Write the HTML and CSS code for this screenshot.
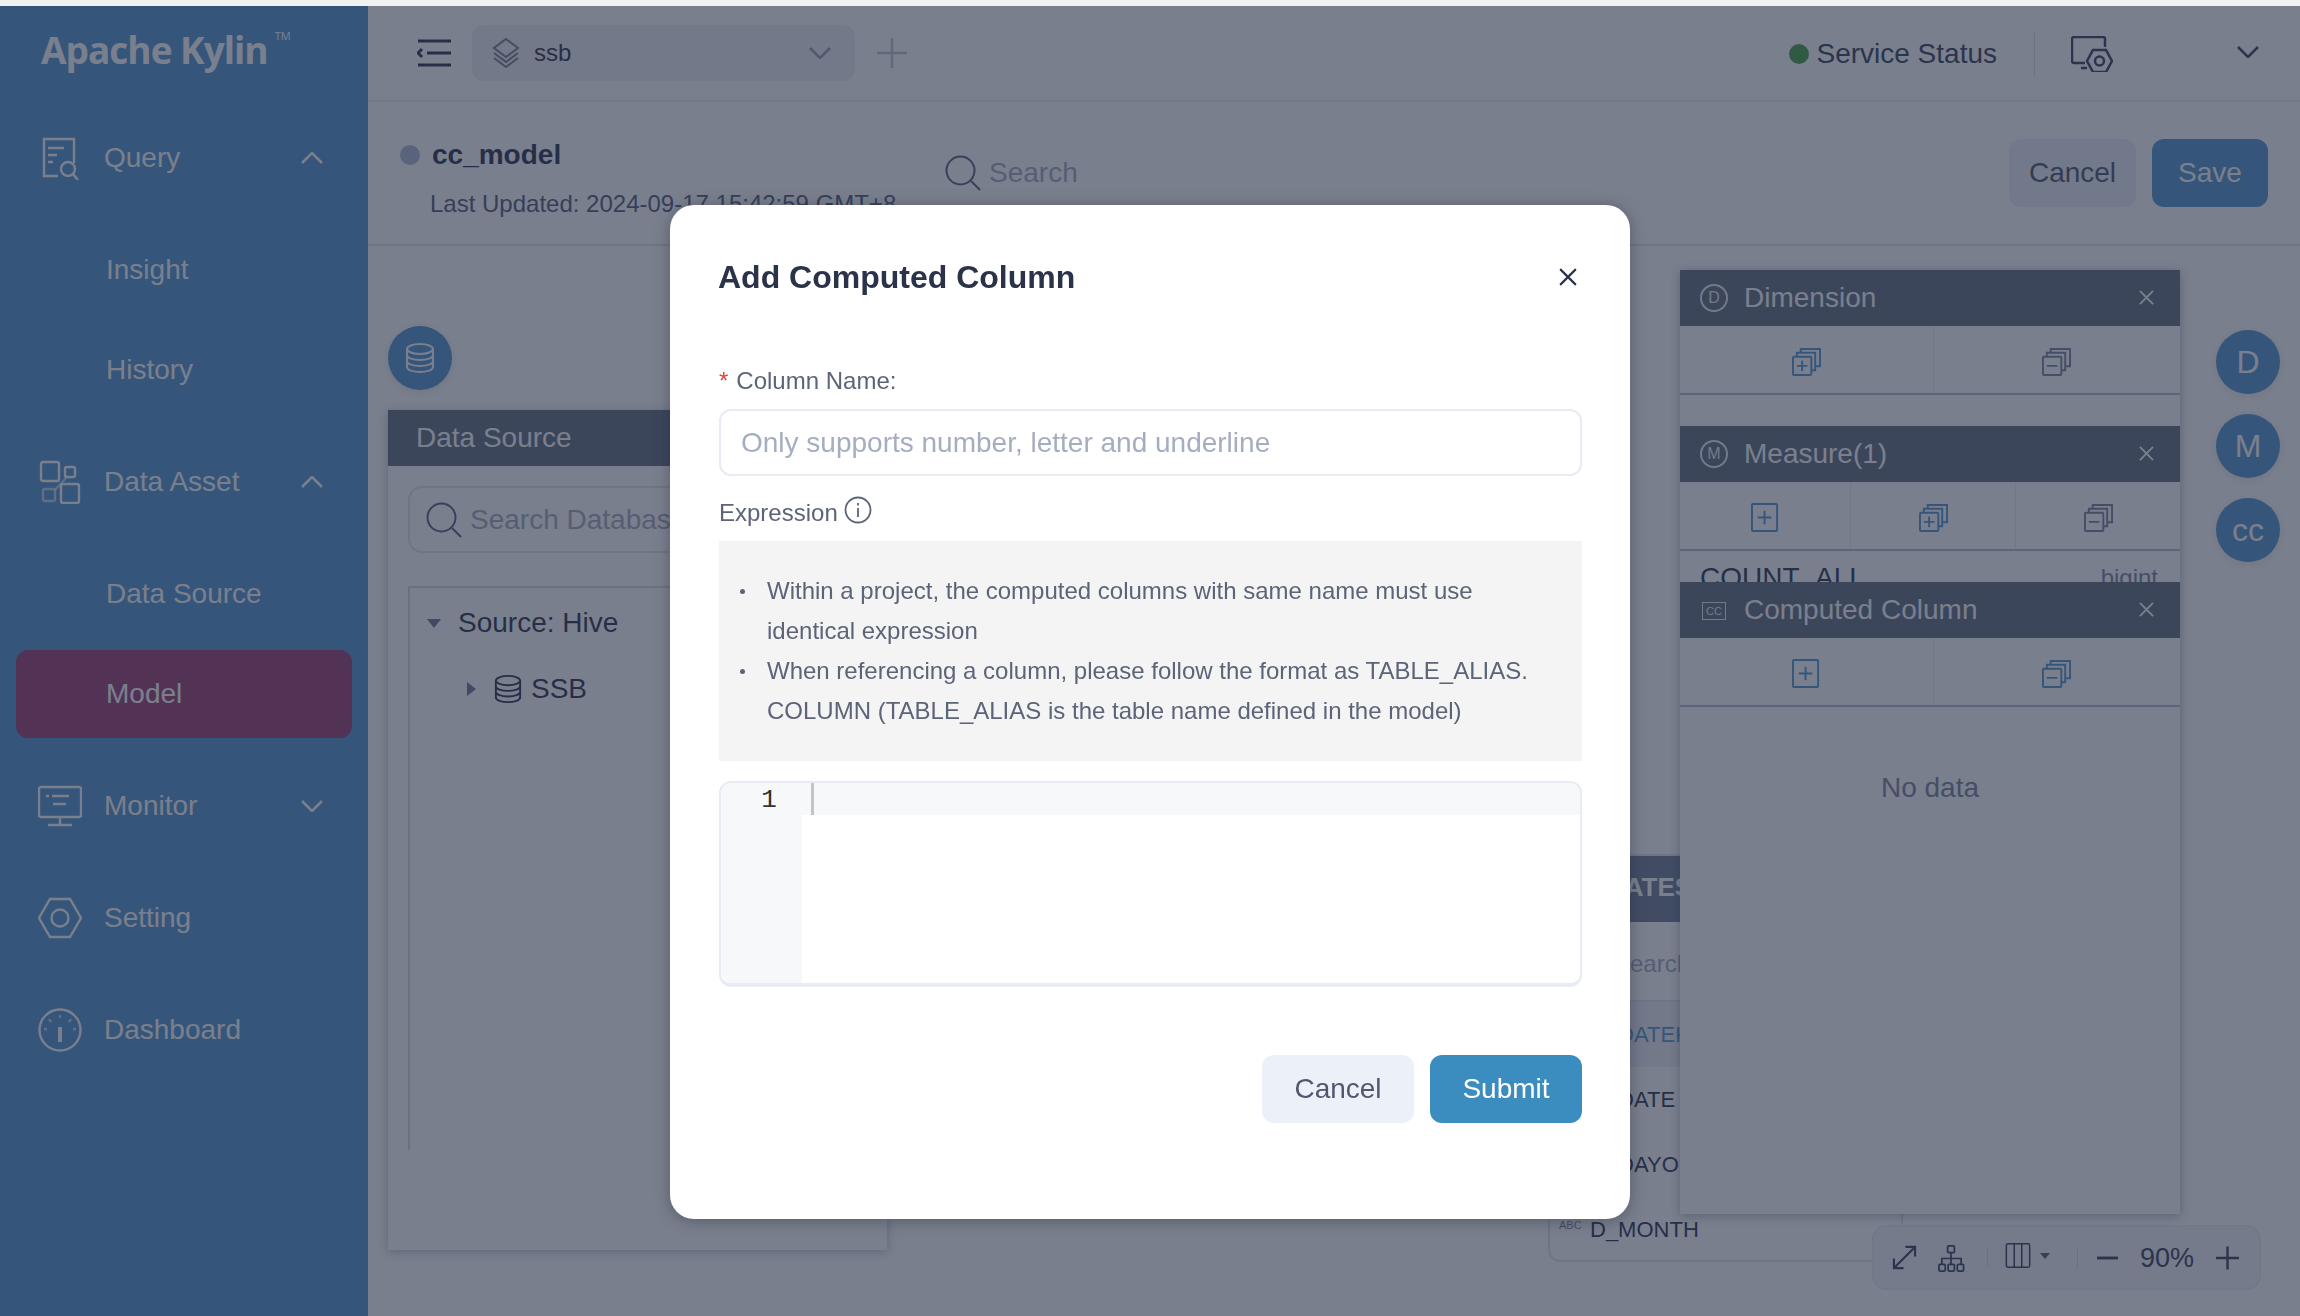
FILE: index.html
```html
<!DOCTYPE html>
<html lang="en">
  <head>
    <meta charset="UTF-8" />
    <title>Apache Kylin</title>
    <link rel="stylesheet" href="styles.css">
  </head>
  <body>
    <svg class="defs" width="0" height="0">
      <symbol id="i-add" viewBox="0 0 30 30"><rect x="1" y="1" width="26" height="28" rx="1"/><path d="M14 8v14M7 15h14"/></symbol>
      <symbol id="i-add-batch" viewBox="0 0 30 30"><rect x="1" y="10" width="19" height="19" rx="1"/><path d="M5 10V6h19v18h-4M9 6V2h20v18h-5M10.500 14v11M5 19.500h11"/></symbol>
      <symbol id="i-minus-batch" viewBox="0 0 30 30"><rect x="1" y="10" width="19" height="19" rx="1"/><path d="M5 10V6h19v18h-4M9 6V2h20v18h-5M5 19.500h11"/></symbol>
      <symbol id="i-db" viewBox="0 0 30 30"><ellipse cx="15" cy="6" rx="13" ry="5"/><path d="M2 6v18c0 3 6 5 13 5s13-2 13-5V6M2 12c0 3 6 5 13 5s13-2 13-5M2 18c0 3 6 5 13 5s13-2 13-5"/></symbol>
      <symbol id="i-search" viewBox="0 0 36 36"><circle cx="15.500" cy="15.500" r="14"/><path d="M26 26l9 9"/></symbol>
      <symbol id="i-close" viewBox="0 0 16 16"><path d="M1 1l14 14M15 1L1 15"/></symbol>
    </svg>

    <div class="app">
      <!-- left menu -->
      <aside class="sidebar">
        <div class="logo">Apache Kylin<sup>TM</sup></div>
        <div class="menu-title">
          <svg class="menu-icon" viewBox="0 0 44 44"><path d="M20 40H6V3h30v24M10 12h16M10 19h9M10 26h5"/><circle cx="30" cy="33" r="7"/><path d="M35 38l5 6"/></svg>
          <span>Query</span>
          <svg class="chev up" viewBox="0 0 22 12"><path d="M1 11L11 1l10 10"/></svg>
        </div>
        <div class="menu-sub">
          <div class="menu-item">Insight</div>
          <div class="menu-item">History</div>
        </div>
        <div class="menu-title">
          <svg class="menu-icon" viewBox="0 0 44 44"><rect x="3" y="2" width="18" height="19" rx="2"/><rect x="27" y="7" width="10" height="10" rx="2"/><rect x="5" y="29" width="12" height="12" rx="2" class="dim"/><rect x="23" y="24" width="18" height="19" rx="2"/><path d="M28 18L17 30" class="dim"/></svg>
          <span>Data Asset</span>
          <svg class="chev up" viewBox="0 0 22 12"><path d="M1 11L11 1l10 10"/></svg>
        </div>
        <div class="menu-sub">
          <div class="menu-item">Data Source</div>
          <div class="menu-item active"><span>Model</span></div>
        </div>
        <div class="menu-title">
          <svg class="menu-icon" viewBox="0 0 44 44"><rect x="1" y="3" width="42" height="30" rx="2"/><path d="M8 12h3M14 12h17M15 20h13M22 33v8M10 41h24"/></svg>
          <span>Monitor</span>
          <svg class="chev" viewBox="0 0 22 12"><path d="M1 1l10 10L21 1"/></svg>
        </div>
        <div class="menu-title">
          <svg class="menu-icon" viewBox="0 0 44 44"><path d="M12 3h20l11 19-11 19H12L1 22z"/><circle cx="22" cy="22" r="8.500"/></svg>
          <span>Setting</span>
        </div>
        <div class="menu-title">
          <svg class="menu-icon" viewBox="0 0 44 44"><circle cx="22" cy="22" r="20.500"/><path d="M22 7v3M11 11l2 3M33 11l-2 3M6 21h3M35 21h3" class="dim"/><path d="M22 19v15" stroke-width="4"/></svg>
          <span>Dashboard</span>
        </div>
      </aside>

      <div class="main">
        <header class="topbar">
          <svg class="hamburger" viewBox="0 0 34 28"><path d="M1 2h33M10 14h24M1 26h33M5 10l-4 4 4 4"/></svg>
          <div class="project">
            <svg class="layers" viewBox="0 0 28 30"><path d="M14 1l12 9-12 9-12-9zM2 15l12 9 12-9M2 20l12 9 12-9"/></svg>
            <span>ssb</span>
            <svg class="chev" viewBox="0 0 22 12"><path d="M1 1l10 10L21 1"/></svg>
          </div>
          <svg class="add-project" viewBox="0 0 30 30"><path d="M15 0v30M0 15h30"/></svg>
          <div class="top-right">
            <i class="dot"></i>
            <span class="status-text">Service Status</span>
            <i class="top-divider"></i>
            <svg class="admin-icon" viewBox="0 0 42 36"><path d="M14 27H3a2 2 0 0 1-2-2V3a2 2 0 0 1 2-2h29a2 2 0 0 1 2 2v8M10 32h6"/><path d="M22 14h13l6 11-6 11H22l-6-11z"/><circle cx="28.500" cy="25" r="4.500"/></svg>
            <svg class="chev user-chev" viewBox="0 0 22 12"><path d="M1 1l10 10L21 1"/></svg>
          </div>
        </header>

        <div class="model-bar">
          <div class="model-info">
            <div class="model-name"><i class="model-dot"></i>cc_model</div>
            <div class="model-time">Last Updated: 2024-09-17 15:42:59 GMT+8</div>
          </div>
          <div class="model-search">
            <svg class="search-icon"><use href="#i-search"/></svg>
            <span>Search</span>
          </div>
          <div class="model-btns">
            <button class="btn btn-plain">Cancel</button>
            <button class="btn btn-primary">Save</button>
          </div>
        </div>

        <!-- model canvas, everything in here is placed freely -->
        <div class="canvas">
          <div class="round-btn db-btn"><svg><use href="#i-db"/></svg></div>

          <div class="ds-panel">
            <div class="panel-head">Data Source</div>
            <div class="ds-body">
              <div class="ds-search">
                <svg class="search-icon"><use href="#i-search"/></svg>
                <span>Search Database</span>
              </div>
              <div class="tree">
                <div class="tree-row"><i class="tri-down"></i>Source: Hive</div>
                <div class="tree-row tree-child"><i class="tri-right"></i><svg class="tree-db"><use href="#i-db"/></svg>SSB</div>
              </div>
            </div>
          </div>

          <div class="table-node">
            <div class="table-head">DATES</div>
            <div class="table-search">Search</div>
            <div class="col-row col-on"><small>ABC</small>D_DATEKEY</div>
            <div class="col-row"><small>ABC</small>D_DATE</div>
            <div class="col-row"><small>ABC</small>D_DAYOFWEEK</div>
            <div class="col-row"><small>ABC</small>D_MONTH</div>
          </div>

          <div class="side-panels">
            <section class="side-panel">
              <div class="side-head">
                <i class="head-mark">D</i><span>Dimension</span>
                <svg class="head-close"><use href="#i-close"/></svg>
              </div>
              <div class="side-actions">
                <div class="act act-on"><svg><use href="#i-add-batch"/></svg></div>
                <div class="act"><svg><use href="#i-minus-batch"/></svg></div>
              </div>
            </section>
            <section class="side-panel">
              <div class="side-head">
                <i class="head-mark">M</i><span>Measure(1)</span>
                <svg class="head-close"><use href="#i-close"/></svg>
              </div>
              <div class="side-actions">
                <div class="act act-on"><svg><use href="#i-add"/></svg></div>
                <div class="act act-on"><svg><use href="#i-add-batch"/></svg></div>
                <div class="act"><svg><use href="#i-minus-batch"/></svg></div>
              </div>
              <div class="measure-row"><span>COUNT_ALL</span><em>bigint</em></div>
            </section>
            <section class="side-panel side-panel-cc">
              <div class="side-head">
                <i class="head-mark head-mark-cc">CC</i><span>Computed Column</span>
                <svg class="head-close"><use href="#i-close"/></svg>
              </div>
              <div class="side-actions">
                <div class="act act-on"><svg><use href="#i-add"/></svg></div>
                <div class="act act-on"><svg><use href="#i-minus-batch"/></svg></div>
              </div>
              <div class="no-data">No data</div>
            </section>
          </div>

          <div class="side-tabs">
            <div class="round-btn">D</div>
            <div class="round-btn">M</div>
            <div class="round-btn">cc</div>
          </div>

          <div class="zoom-bar">
            <svg class="zb-expand" viewBox="0 0 26 26"><path d="M2 24L24 2M14 2h10v10M2 14v10h10"/></svg>
            <svg class="zb-tree" viewBox="0 0 28 28"><rect x="10" y="1" width="7" height="7" rx="1"/><rect x="1" y="20" width="6.500" height="7" rx="1"/><rect x="10.500" y="20" width="6.500" height="7" rx="1"/><rect x="20" y="20" width="6.500" height="7" rx="1"/><path d="M13.500 8v6M4 20v-6h20v6M13.500 14v6"/></svg>
            <i class="zb-line zb-line-a"></i>
            <svg class="zb-cols" viewBox="0 0 30 30"><rect x="1" y="1" width="28" height="28" rx="2"/><path d="M10.500 1v28M19.500 1v28"/></svg>
            <i class="zb-caret"></i>
            <i class="zb-line zb-line-b"></i>
            <svg class="zb-minus" viewBox="0 0 22 4"><path d="M0 2h22"/></svg>
            <span class="zb-val">90%</span>
            <svg class="zb-plus" viewBox="0 0 24 24"><path d="M12 0v24M0 12h24"/></svg>
          </div>
        </div>
      </div>
    </div>

    <div class="mask"></div>

    <div class="dialog-wrap">
      <div class="dialog">
        <div class="dialog-head">
          <h2>Add Computed Column</h2>
          <svg class="dialog-close"><use href="#i-close"/></svg>
        </div>
        <label class="form-label"><b>*</b>Column Name:</label>
        <input class="form-input" type="text" placeholder="Only supports number, letter and underline" />
        <div class="expr-label">
          Expression
          <svg class="info-icon" viewBox="0 0 28 28"><circle cx="14" cy="14" r="12.500"/><path d="M14 12v9M14 7v2.500"/></svg>
        </div>
        <ul class="tips">
          <li>Within a project, the computed columns with same name must use<br />identical expression</li>
          <li>When referencing a column, please follow the format as TABLE_ALIAS.<br />COLUMN (TABLE_ALIAS is the table name defined in the model)</li>
        </ul>
        <div class="editor">
          <div class="gutter">1</div>
          <div class="code"><div class="code-line"><i class="cursor"></i></div></div>
        </div>
        <div class="dialog-foot">
          <button class="btn btn-light">Cancel</button>
          <button class="btn btn-submit">Submit</button>
        </div>
      </div>
    </div>
  </body>
</html>
```

FILE: styles.css
```css
* {
  box-sizing: border-box;
}
html,
body {
  margin: 0;
  height: 100%;
}
body {
  background: #f1f1f1;
  padding-top: 6px;
  font-family: "Liberation Sans", Arial, sans-serif;
  font-size: 28px;
  color: #2f3850;
  overflow: hidden;
}
i {
  font-style: normal;
}
svg {
  fill: none;
  stroke: currentColor;
  stroke-width: 2;
}
.defs {
  position: absolute;
}
.app {
  display: flex;
  height: 1310px;
  background: #fff;
}

/* sidebar */
.sidebar {
  width: 368px;
  flex: none;
  background: #5398cf;
  color: #fff;
}
.logo {
  height: 96px;
  padding: 22px 0 0 41px;
  font-family: "Open Sans", sans-serif;
  font-weight: 700;
  font-size: 37px;
  letter-spacing: -1px;
  line-height: 44px;
}
.logo sup {
  font-size: 11px;
  font-weight: 400;
  letter-spacing: 0;
  vertical-align: 24px;
  margin-left: 7px;
  line-height: 0;
}
.menu-title {
  display: flex;
  align-items: center;
  height: 112px;
  padding-left: 38px;
  position: relative;
}
.menu-icon {
  width: 44px;
  height: 44px;
  margin-right: 22px;
  stroke-width: 2.400;
}
.menu-icon .dim {
  opacity: 0.6;
}
.chev {
  width: 22px;
  height: 12px;
  stroke-width: 2.500;
}
.menu-title .chev {
  position: absolute;
  left: 301px;
  top: 50px;
}
.menu-sub {
  padding: 6px 0;
}
.menu-item {
  display: flex;
  align-items: center;
  height: 100px;
  padding-left: 106px;
}
.menu-item.active {
  padding: 6px 16px;
}
.menu-item.active span {
  flex: 1;
  height: 88px;
  line-height: 88px;
  padding-left: 90px;
  background: #9b4375;
  border-radius: 12px;
}

/* top bars */
.main {
  flex: 1;
  min-width: 0;
  display: flex;
  flex-direction: column;
}
.topbar {
  height: 96px;
  flex: none;
  display: flex;
  align-items: center;
  padding-left: 49px;
  border-bottom: 2px solid #eceef3;
}
.hamburger {
  width: 34px;
  height: 28px;
  stroke-width: 3;
  margin-right: 21px;
}
.project {
  width: 383px;
  height: 56px;
  background: #eef0f5;
  border-radius: 12px;
  display: flex;
  align-items: center;
  padding-left: 20px;
  font-size: 24px;
}
.layers {
  width: 28px;
  height: 30px;
  margin-right: 14px;
  opacity: 0.6;
}
.project .chev {
  margin-left: auto;
  margin-right: 24px;
  color: #9aa1b5;
}
.add-project {
  width: 30px;
  height: 30px;
  margin-left: 22px;
  color: #c2c6d2;
  stroke-width: 2.500;
}
.top-right {
  margin: 2px 0 0 auto;
  display: flex;
  align-items: center;
}
.dot {
  width: 20px;
  height: 20px;
  border-radius: 50%;
  background: #4aa44a;
  margin-right: 7px;
}
.status-text {
  color: #3a4460;
}
.top-divider {
  width: 1px;
  height: 44px;
  background: #dfe2ea;
  margin: 0 36px 0 37px;
}
.admin-icon {
  width: 42px;
  height: 36px;
  stroke-width: 2.500;
  color: #3a4460;
}
.user-chev {
  margin: -4px 41px 0 124px;
  color: #3a4460;
}
.model-bar {
  height: 144px;
  flex: none;
  display: flex;
  border-bottom: 2px solid #e2e5ee;
  position: relative;
}
.model-info {
  width: 550px;
  padding: 35px 0 0 32px;
}
.model-name {
  display: flex;
  align-items: center;
  font-weight: 700;
  height: 36px;
}
.model-dot {
  width: 20px;
  height: 20px;
  border-radius: 50%;
  background: #b0b8d4;
  margin-right: 12px;
}
.model-time {
  font-size: 24px;
  color: #56607c;
  margin: 17px 0 0 30px;
  white-space: nowrap;
}
.model-search {
  display: flex;
  align-items: center;
  margin: 0 0 0 27px;
  height: 142px;
  color: #a5acc0;
}
.search-icon {
  width: 36px;
  height: 36px;
  margin-right: 8px;
  color: #5a6580;
}
.model-btns {
  margin: 37px 32px 0 auto;
  display: flex;
  gap: 16px;
}
.btn {
  font: inherit;
  height: 68px;
  border: 0;
  border-radius: 12px;
  padding: 0;
}
.btn-plain {
  width: 127px;
  background: #ecf0f8;
  color: #4f586e;
}
.btn-primary {
  width: 116px;
  background: #5398cf;
  color: #fff;
}

/* canvas */
.canvas {
  flex: 1;
  position: relative;
  overflow: hidden;
}
.round-btn {
  width: 64px;
  height: 64px;
  border-radius: 50%;
  background: #5398cf;
  color: #fff;
  font-size: 32px;
  display: flex;
  align-items: center;
  justify-content: center;
  box-shadow: 0 2px 8px rgba(0, 0, 0, 0.1);
}
.db-btn {
  position: absolute;
  left: 20px;
  top: 80px;
}
.db-btn svg {
  width: 30px;
  height: 30px;
}
.ds-panel {
  position: absolute;
  left: 20px;
  top: 164px;
  width: 499px;
  height: 840px;
  background: #fff;
  box-shadow: 0 2px 10px rgba(30, 40, 70, 0.3);
}
.panel-head {
  height: 56px;
  line-height: 56px;
  padding-left: 28px;
  background: #627082;
  color: #fff;
}
.ds-body {
  padding: 20px;
}
.ds-search {
  height: 67px;
  border: 2px solid #e2e5ee;
  border-radius: 14px;
  display: flex;
  align-items: center;
  padding-left: 16px;
  color: #a5acc0;
  white-space: nowrap;
  overflow: hidden;
}
.tree {
  margin-top: 33px;
  height: 564px;
  border: 2px solid #d9dde8;
  border-bottom: 0;
  padding-top: 2px;
}
.tree-row {
  height: 66px;
  display: flex;
  align-items: center;
  padding-left: 17px;
}
.tree-child {
  padding-left: 57px;
}
.tri-down {
  border: 7px solid transparent;
  border-top: 9px solid #6f7a99;
  border-bottom: 0;
  margin-right: 17px;
}
.tri-right {
  border: 7px solid transparent;
  border-left: 9px solid #6f7a99;
  border-right: 0;
  margin-right: 18px;
}
.tree-db {
  width: 28px;
  height: 28px;
  margin-right: 9px;
}
.table-node {
  position: absolute;
  left: 1180px;
  top: 608px;
  width: 355px;
  height: 408px;
  background: #fff;
  border: 2px solid #e2e5ee;
  border-radius: 12px;
  overflow: hidden;
}
.table-head {
  height: 68px;
  line-height: 66px;
  padding-left: 58px;
  background: #70809a;
  color: #fff;
  font-weight: 700;
  font-size: 26px;
  margin: -2px -2px 0;
}
.table-search {
  height: 80px;
  line-height: 84px;
  padding-left: 64px;
  color: #a5acc0;
  font-size: 24px;
  border-bottom: 2px solid #e2e5ee;
}
.col-row {
  height: 65px;
  display: flex;
  align-items: center;
  padding-left: 9px;
  font-size: 22px;
  white-space: nowrap;
}
.col-row small {
  font-size: 11px;
  color: #7b86a0;
  width: 31px;
  margin-top: -10px;
}
.col-on {
  background: #eef0f6;
  color: #5398cf;
}
.side-panels {
  position: absolute;
  left: 1312px;
  top: 24px;
  width: 500px;
  height: 944px;
  background: #fff;
  box-shadow: 0 2px 10px rgba(30, 40, 70, 0.35);
  display: flex;
  flex-direction: column;
}
.side-panel {
  height: 156px;
  flex: none;
  overflow: hidden;
}
.side-panel-cc {
  flex: 1;
}
.side-head {
  height: 56px;
  background: #627082;
  color: #fff;
  display: flex;
  align-items: center;
  padding-left: 20px;
  position: relative;
}
.head-mark {
  width: 28px;
  height: 28px;
  border: 2px solid #fff;
  border-radius: 50%;
  font-size: 16px;
  display: flex;
  align-items: center;
  justify-content: center;
  margin-right: 16px;
  opacity: 0.9;
}
.head-mark-cc {
  width: 24px;
  height: 18px;
  border-radius: 0;
  border-width: 1.500px;
  font-size: 11px;
  margin: 2px 18px 0 2px;
}
.head-close {
  position: absolute;
  left: 459px;
  top: 20px;
  width: 15px;
  height: 15px;
}
.side-actions {
  height: 69px;
  display: flex;
  border-bottom: 2px solid #b8bfd0;
}
.act {
  flex: 1 1 0;
  display: flex;
  align-items: center;
  justify-content: center;
  padding-top: 3px;
  color: #7b86a0;
  border-left: 1px solid #eceef3;
}
.act:first-child {
  border-left: 0;
  padding: 3px 3px 0;
}
.act svg {
  width: 29px;
  height: 29px;
  stroke-width: 2;
}
.act-on {
  color: #5398cf;
}
.measure-row {
  display: flex;
  justify-content: space-between;
  padding: 11px 22px 0 20px;
}
.measure-row em {
  font-style: normal;
  font-size: 24px;
  color: #7b86a0;
  padding-top: 2px;
}
.no-data {
  text-align: center;
  margin-top: 65px;
  color: #7b86a0;
}
.side-tabs {
  position: absolute;
  left: 1848px;
  top: 84px;
  display: flex;
  flex-direction: column;
  gap: 20px;
}
.zoom-bar {
  position: absolute;
  left: 1506px;
  top: 981px;
  width: 385px;
  height: 61px;
  background: #f3f4f8;
  border-radius: 12px;
  color: #3a4460;
  box-shadow: 0 0 0 2px #eceef3;
}
.zoom-bar > * {
  position: absolute;
}
.zb-expand {
  left: 18px;
  top: 18px;
  width: 25px;
  height: 25px;
  stroke-width: 2.200;
}
.zb-tree {
  left: 64px;
  top: 18px;
  width: 27px;
  height: 27px;
  stroke-width: 1.800;
}
.zb-line {
  width: 1px;
  height: 20px;
  top: 21px;
  background: #d9dde8;
}
.zb-line-a {
  left: 113px;
}
.zb-line-b {
  left: 203px;
}
.zb-cols {
  left: 130px;
  top: 16px;
  width: 28px;
  height: 25px;
  stroke-width: 1.800;
}
.zb-caret {
  left: 166px;
  top: 26px;
  border: 5px solid transparent;
  border-top: 6px solid #56607c;
  border-bottom: 0;
}
.zb-minus {
  left: 223px;
  top: 29px;
  width: 21px;
  height: 4px;
  stroke-width: 3;
}
.zb-val {
  left: 266px;
  top: 15px;
  line-height: 32px;
  font-size: 27px;
}
.zb-plus {
  left: 342px;
  top: 19px;
  width: 23px;
  height: 24px;
  stroke-width: 2.500;
}

/* mask and dialog */
.mask {
  position: fixed;
  left: 0;
  right: 0;
  top: 6px;
  bottom: 0;
  background: rgba(33, 42, 65, 0.6);
}
.dialog-wrap {
  position: fixed;
  left: 0;
  right: 0;
  top: 205px;
  display: flex;
  justify-content: center;
}
.dialog {
  width: 960px;
  height: 1014px;
  background: #fff;
  border-radius: 24px;
  padding: 48px 48px 0 49px;
  box-shadow: 0 2px 16px rgba(20, 25, 45, 0.35);
  color: #5c6478;
  font-size: 24px;
}
.dialog-head {
  display: flex;
  justify-content: space-between;
  align-items: center;
  height: 48px;
  margin-bottom: 62px;
}
.dialog-head h2 {
  margin: 0 0 0 -1px;
  font-size: 32px;
  color: #2b3349;
}
.dialog-close {
  width: 18px;
  height: 18px;
  margin-right: 5px;
  color: #2b3349;
  stroke-width: 1.900;
}
.form-label {
  display: block;
  line-height: 36px;
  margin-bottom: 10px;
}
.form-label b {
  color: #e0433b;
  font-weight: 400;
  margin-right: 8px;
}
.form-input {
  display: block;
  width: 100%;
  height: 67px;
  border: 2px solid #e6ebf4;
  border-radius: 12px;
  padding: 0 20px;
  font: inherit;
  font-size: 28px;
  outline: 0;
  margin-bottom: 19px;
}
.form-input::placeholder {
  color: #a5adc0;
  opacity: 1;
}
.expr-label {
  display: flex;
  align-items: center;
  height: 36px;
  margin-bottom: 10px;
}
.info-icon {
  width: 28px;
  height: 28px;
  margin: -6px 0 0 6px;
  stroke-width: 1.800;
}
.tips {
  height: 220px;
  margin: 0 0 20px;
  padding: 30px 0 0 48px;
  background: #f4f4f5;
  line-height: 40px;
  list-style: none;
}
.tips li {
  position: relative;
}
.tips li::before {
  content: "";
  position: absolute;
  left: -27px;
  top: 18px;
  width: 5px;
  height: 5px;
  border-radius: 50%;
  background: #5c6478;
}
.editor {
  height: 206px;
  border: 2px solid #e6ebf4;
  border-bottom-width: 4px;
  border-radius: 12px;
  display: flex;
  overflow: hidden;
  margin-bottom: 68px;
}
.gutter {
  width: 81px;
  flex: none;
  background: #f7f8fa;
  text-align: center;
  padding-left: 15px;
  line-height: 35px;
  font-family: "Liberation Mono", monospace;
  color: #333;
  font-size: 26px;
}
.code {
  flex: 1;
}
.code-line {
  height: 32px;
  background: #f7f8fa;
  padding-left: 9px;
}
.cursor {
  display: block;
  width: 3px;
  height: 32px;
  background: #c4c4c4;
}
.dialog-foot {
  display: flex;
  justify-content: flex-end;
  gap: 16px;
}
.dialog-foot .btn {
  width: 152px;
  font-size: 28px;
}
.btn-light {
  background: #ecf0f8;
  color: #4f586e;
}
.btn-submit {
  background: #3c8dbf;
  color: #fff;
}
```
